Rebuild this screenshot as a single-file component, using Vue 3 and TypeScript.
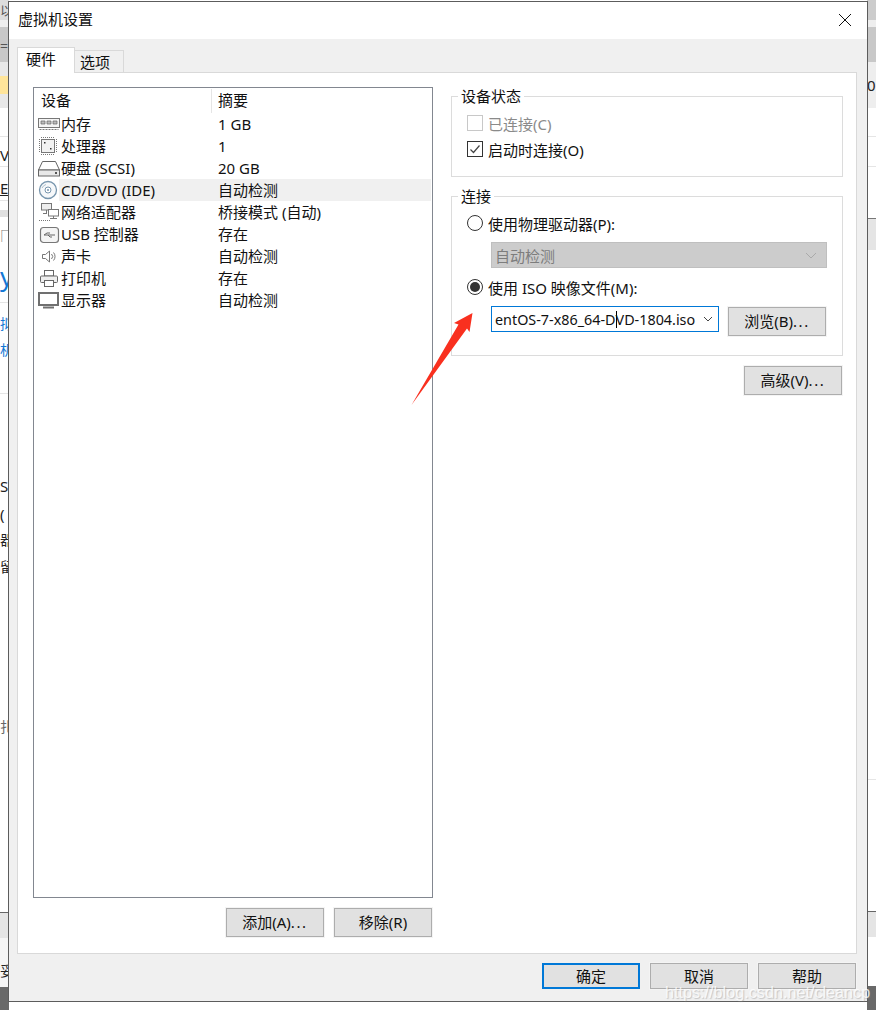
<script setup lang="ts">
interface Seg { h: number; bg: string; text?: string; color?: string; size?: number; line?: string; under?: boolean }
const leftSegs: Seg[] = [
  { h: 20, bg: '#dddddd', text: '以', color: '#555', size: 13 },
  { h: 7, bg: '#eeeeee' },
  { h: 9, bg: '#c8c8c8' },
  { h: 26, bg: '#c8c8c8', text: '=', color: '#555', size: 14 },
  { h: 14, bg: '#e8e8e8' },
  { h: 18, bg: '#ffe59a' },
  { h: 14, bg: '#e8e8e8' },
  { h: 29, bg: '#ffffff', line: '#e5e5e5' },
  { h: 8, bg: '#ffffff' },
  { h: 22, bg: '#ffffff', text: 'VI', color: '#222', size: 15, line: '#e5e5e5' },
  { h: 11, bg: '#ffffff' },
  { h: 23, bg: '#ffffff', text: 'E', color: '#222', size: 15, under: true, line: '#e5e5e5' },
  { h: 9, bg: '#ffffff' },
  { h: 7, bg: '#e0e0e0' },
  { h: 9, bg: '#ffffff' },
  { h: 16, bg: '#ffffff', text: '□', color: '#777', size: 15 },
  { h: 24, bg: '#ffffff' },
  { h: 37, bg: '#ffffff', text: 'y', color: '#1478d4', size: 26, line: '#e5e5e5' },
  { h: 11, bg: '#ffffff' },
  { h: 26, bg: '#ffffff', text: '拟', color: '#1478d4', size: 14 },
  { h: 54, bg: '#ffffff', text: '机', color: '#1478d4', size: 14, line: '#e5e5e5' },
  { h: 82, bg: '#ffffff' },
  { h: 28, bg: '#ffffff', text: 'SI', color: '#222', size: 15 },
  { h: 26, bg: '#ffffff', text: '(', color: '#222', size: 15 },
  { h: 27, bg: '#ffffff', text: '器', color: '#222', size: 14 },
  { h: 160, bg: '#ffffff', text: '留', color: '#222', size: 14 },
  { h: 27, bg: '#ffffff', text: '扎', color: '#666', size: 14 },
  { h: 169, bg: '#ffffff', line: '#666666' },
  { h: 25, bg: '#e5e5e5' },
  { h: 23, bg: '#f5f5f5' },
  { h: 26, bg: '#f5f5f5', text: '妥', color: '#222', size: 14 },
  { h: 23, bg: '#696969' },
]
const rightSegs: Seg[] = [
  { h: 20, bg: '#cccccc' },
  { h: 7, bg: '#eeeeee' },
  { h: 35, bg: '#c8c8c8' },
  { h: 13, bg: '#eeeeee' },
  { h: 33, bg: '#eeeeee', text: '0', color: '#222', size: 15 },
  { h: 29, bg: '#ffffff', line: '#e5e5e5' },
  { h: 30, bg: '#ffffff', line: '#e5e5e5' },
  { h: 52, bg: '#ffffff', line: '#777777' },
  { h: 31, bg: '#e5e5e5' },
  { h: 530, bg: '#ffffff', line: '#e5e5e5' },
  { h: 132, bg: '#ffffff', line: '#666666' },
  { h: 25, bg: '#e5e5e5' },
  { h: 49, bg: '#ffffff' },
  { h: 24, bg: '#696969' },
]
function segStyle(s: Seg) {
  return {
    height: s.h + 'px',
    background: s.bg,
    color: s.color,
    fontSize: s.size ? s.size + 'px' : undefined,
    borderBottom: s.line ? `1px solid ${s.line}` : undefined,
    textDecoration: s.under ? 'underline' : undefined,
  }
}
const devices = [
  { id: 'mem', name: '内存', summary: '1 GB' },
  { id: 'cpu', name: '处理器', summary: '1' },
  { id: 'hdd', name: '硬盘 (SCSI)', summary: '20 GB' },
  { id: 'cd', name: 'CD/DVD (IDE)', summary: '自动检测', active: true },
  { id: 'net', name: '网络适配器', summary: '桥接模式 (自动)' },
  { id: 'usb', name: 'USB 控制器', summary: '存在' },
  { id: 'snd', name: '声卡', summary: '自动检测' },
  { id: 'prn', name: '打印机', summary: '存在' },
  { id: 'mon', name: '显示器', summary: '自动检测' },
]
</script>

<template>
  <div class="desk">
    <div class="strip strip-left">
      <div v-for="(s, i) in leftSegs" :key="i" class="seg" :style="segStyle(s)">{{ s.text }}</div>
    </div>
    <div class="strip strip-right">
      <div v-for="(s, i) in rightSegs" :key="i" class="seg" :style="segStyle(s)">{{ s.text }}</div>
    </div>

    <div class="dialog">
      <header class="titlebar">
        <span class="title">虚拟机设置</span>
        <svg class="close" width="14" height="14" viewBox="0 0 14 14"><path d="M1 1 L13 13 M13 1 L1 13" stroke="#111" stroke-width="1" fill="none" /></svg>
      </header>
      <div class="body">
        <div class="tabs">
          <div class="tab tab-active">硬件</div>
          <div class="tab">选项</div>
        </div>
        <div class="panel">
          <div class="left">
            <div class="list">
              <div class="list-head">
                <span class="col-a">设备</span>
                <span class="col-b">摘要</span>
              </div>
              <div v-for="d in devices" :key="d.id" class="row">
                <svg class="ico" width="25" height="22" viewBox="0 0 25 22">
                  <g v-if="d.id === 'mem'" fill="none" stroke="#777">
                    <rect x="4.5" y="5.5" width="21" height="9" fill="#f4f4f4" />
                    <path d="M7 8h4v3H7zM13 8h4v3h-4zM19 8h4v3h-4z" fill="#bbb" stroke="#666" stroke-width=".7" />
                    <path d="M5.5 16.5h19" stroke-dasharray="2 1" />
                  </g>
                  <g v-else-if="d.id === 'cpu'" fill="none" stroke="#777">
                    <rect x="7.5" y="4.5" width="13" height="13" fill="#f2f2f2" />
                    <path d="M7 2.500h14M7 19.500h14M5.500 4v14M22.500 4v14" stroke-dasharray="1 1" />
                    <path d="M10 7h1.500v1.500H10zM16 13h1.500v1.500H16z" fill="#333" stroke="none" />
                  </g>
                  <g v-else-if="d.id === 'hdd'" fill="none" stroke="#666">
                    <path d="M8.500 4.500h13l4 8.500h-21z" fill="#fff" />
                    <rect x="4.500" y="13" width="21" height="6" fill="#e8e8e8" />
                    <rect x="21" y="15" width="2" height="2" fill="#555" stroke="none" />
                  </g>
                  <g v-else-if="d.id === 'cd'" fill="none" stroke="#7795ad">
                    <circle cx="14" cy="11" r="8.500" stroke-width="1.300" fill="#f6f8fa" />
                    <circle cx="14" cy="11" r="3" fill="#fff" />
                    <circle cx="14" cy="11" r="1" fill="#7795ad" stroke="none" />
                    <path d="M8 9a6.500 6.500 0 0 1 4-3.500" stroke="#aebfcc" />
                  </g>
                  <g v-else-if="d.id === 'net'" fill="none" stroke="#777">
                    <rect x="7.500" y="2.500" width="10" height="6.500" fill="#eee" />
                    <path d="M12.500 9v3M9 12.500h4" />
                    <rect x="14.500" y="8.500" width="10" height="6.500" fill="#fff" />
                    <path d="M19.500 15v2M16 17.500h7" />
                    <path d="M5 19.500h12" stroke-dasharray="1 1" />
                  </g>
                  <g v-else-if="d.id === 'usb'" fill="none" stroke="#777">
                    <rect x="6.500" y="4.500" width="18" height="15" rx="3" stroke-width="1.200" fill="#f4f4f4" />
                    <path d="M10 12h11M10 12l3-2M13 10h3M14 12l2 2h2" stroke="#666" />
                  </g>
                  <g v-else-if="d.id === 'snd'" fill="none" stroke="#777">
                    <path d="M8.500 9.500h3l4-3.500v11l-4-3.500h-3z" fill="#fff" />
                    <path d="M17.500 9a3.500 3.500 0 0 1 0 5M19.500 7.500a6 6 0 0 1 0 8" />
                  </g>
                  <g v-else-if="d.id === 'prn'" fill="none" stroke="#666">
                    <rect x="10.500" y="3.500" width="9" height="5.500" fill="#fff" />
                    <rect x="6.500" y="9" width="17" height="6.500" rx="1" fill="#eee" />
                    <rect x="10.500" y="13.500" width="9" height="6" fill="#fff" />
                  </g>
                  <g v-else fill="none" stroke="#707070">
                    <rect x="5" y="4" width="19" height="12" stroke-width="2" fill="#fff" />
                    <path d="M9 18.500h11" stroke-width="2" />
                  </g>
                </svg>
                <div class="row-body" :class="{ 'row-active': d.active }">
                  <span class="cell-name">{{ d.name }}</span>
                  <span class="cell-sum">{{ d.summary }}</span>
                </div>
              </div>
            </div>
            <div class="left-actions">
              <button class="btn" type="button">添加(A)<span class="dots">...</span></button>
              <button class="btn" type="button">移除(R)</button>
            </div>
          </div>

          <div class="right">
            <fieldset class="group group-status">
              <legend>设备状态</legend>
              <div class="opt opt-disabled">
                <span class="check check-off"></span>已连接(C)
              </div>
              <div class="opt opt-second">
                <span class="check">
                  <svg width="14" height="14" viewBox="0 0 14 14"><path d="M2.500 7.500 L5.500 10.500 L11.500 3.500" fill="none" stroke="#444" stroke-width="1.200" /></svg>
                </span>启动时连接(O)
              </div>
            </fieldset>
            <fieldset class="group group-conn">
              <legend>连接</legend>
              <div class="opt">
                <span class="radio"></span>使用物理驱动器(P):
              </div>
              <div class="combo combo-disabled">
                <span>自动检测</span>
                <svg width="12" height="7" viewBox="0 0 12 7"><path d="M1 1 L6 6 L11 1" fill="none" stroke="#aaa" /></svg>
              </div>
              <div class="opt opt-iso">
                <span class="radio"><i class="dot"></i></span>使用 ISO 映像文件(M):
              </div>
              <div class="iso-row">
                <div class="combo combo-iso">
                  <span class="iso-text">entOS-7-x86_64-D<i class="caret"></i>VD-1804.iso</span>
                  <svg width="10" height="6" viewBox="0 0 10 6"><path d="M1 1 L5 5 L9 1" fill="none" stroke="#444" /></svg>
                </div>
                <button class="btn" type="button">浏览(B)<span class="dots">...</span></button>
              </div>
            </fieldset>
            <div class="adv">
              <button class="btn" type="button">高级(V)<span class="dots">...</span></button>
            </div>
          </div>
        </div>
        <footer class="footer">
          <button class="btn btn-primary" type="button">确定</button>
          <button class="btn" type="button">取消</button>
          <button class="btn" type="button">帮助</button>
        </footer>
      </div>
    </div>

    <svg class="arrow" width="70" height="100" viewBox="410 310 70 100">
      <path d="M472.500 313 L454 323 L458.500 324.500 L411.500 405 L467 328.500 L469.500 332 Z" fill="#f9301f" />
    </svg>
    <div class="watermark">https://blog.csdn.net/cleancp</div>
  </div>
</template>

<style scoped>
.desk {
  position: relative;
  width: 876px;
  height: 1010px;
  overflow: hidden;
  background: #fff;
  display: flex;
  justify-content: space-between;
  font-family: "Noto Sans", "Noto Sans CJK SC", sans-serif;
  font-size: 15px;
  color: #111;
}
.strip {
  width: 9px;
  display: flex;
  flex-direction: column;
  overflow: hidden;
}
.seg {
  box-sizing: border-box;
  flex: none;
  overflow: hidden;
  white-space: nowrap;
  line-height: 20px;
}
.dialog {
  position: absolute;
  left: 8px;
  top: 1px;
  width: 860px;
  height: 1001px;
  box-sizing: border-box;
  border: 1px solid #5c5c5c;
  background: #f0f0f0;
  display: flex;
  flex-direction: column;
}
.titlebar {
  height: 37px;
  box-sizing: border-box;
  flex: none;
  background: #fff;
  display: flex;
  align-items: center;
  justify-content: space-between;
  padding: 0 15px 2px 9px;
}
.title {
  line-height: 20px;
  font-size: 15px;
  margin-bottom: 2px;
}
.body {
  flex: 1;
  display: flex;
  flex-direction: column;
  padding: 9px 10px 0 8px;
}
.tabs {
  display: flex;
  align-items: flex-end;
  height: 25px;
  flex: none;
  position: relative;
  z-index: 1;
  margin-bottom: -1px;
}
.tab {
  width: 49px;
  height: 23px;
  box-sizing: border-box;
  border: 1px solid #d9d9d9;
  border-left: 0;
  background: #f0f0f0;
  padding-left: 5px;
  line-height: 22px;
}
.tab-active {
  width: 58px;
  height: 26px;
  background: #fff;
  border-left: 1px solid #d9d9d9;
  border-bottom: 0;
  padding-left: 8px;
  line-height: 23px;
}
.panel {
  height: 882px;
  flex: none;
  box-sizing: border-box;
  background: #fff;
  border: 1px solid #d9d9d9;
  display: flex;
  padding: 14px 13px 0 15px;
}
.left {
  width: 400px;
  flex: none;
  display: flex;
  flex-direction: column;
}
.list {
  height: 811px;
  box-sizing: border-box;
  border: 1px solid #828790;
  flex: none;
}
.list-head {
  height: 25px;
  display: flex;
  line-height: 24px;
}
.col-a {
  width: 178px;
  box-sizing: border-box;
  padding-left: 7px;
  border-right: 1px solid #e5e5e5;
  height: 24px;
  margin-top: 1px;
  line-height: 22px;
}
.col-b {
  padding-left: 6px;
}
.row {
  height: 22px;
  display: flex;
}
.ico {
  flex: none;
  overflow: visible;
}
.row-body {
  flex: 1;
  display: flex;
  line-height: 22px;
  margin-right: 1px;
}
.row-active {
  background: #f0f0f0;
}
.cell-name {
  width: 153px;
  padding-left: 2px;
  box-sizing: border-box;
  white-space: nowrap;
}
.cell-sum {
  padding-left: 6px;
  white-space: nowrap;
}
.left-actions {
  display: flex;
  justify-content: flex-end;
  gap: 10px;
  margin-top: 10px;
  padding-right: 1px;
}
.btn {
  width: 98px;
  height: 29px;
  box-sizing: border-box;
  border: 1px solid #adadad;
  outline: 1px solid #f4f4f4;
  background: #e1e1e1;
  color: #111;
  font: inherit;
  padding: 0;
  line-height: 25px;
  flex: none;
}
.dots {
  letter-spacing: 1.6px;
}
.right {
  margin-left: 18px;
  width: 392px;
  display: flex;
  flex-direction: column;
}
.group {
  margin: 0;
  padding: 0 0 0 15px;
  box-sizing: border-box;
  border: 1px solid #dcdcdc;
  min-width: 0;
}
.group legend {
  margin-left: -9px;
  padding: 0 3px;
  line-height: 18px;
}
.group-status {
  height: 90px;
}
.group-conn {
  height: 169px;
  margin-top: 10px;
}
.opt {
  display: flex;
  align-items: center;
  gap: 5px;
  height: 22px;
  white-space: nowrap;
}
.group-status .opt:first-of-type {
  margin-top: 7px;
}
.opt-disabled {
  color: #8a8a8a;
}
.opt-second {
  margin-top: 4px;
}
.check {
  width: 16px;
  height: 16px;
  box-sizing: border-box;
  border: 1px solid #333;
  display: flex;
  align-items: center;
  justify-content: center;
  flex: none;
  background: #fff;
}
.check-off {
  border-color: #c8c8c8;
}
.radio {
  width: 16px;
  height: 16px;
  box-sizing: border-box;
  border: 1px solid #333;
  border-radius: 50%;
  display: flex;
  align-items: center;
  justify-content: center;
  flex: none;
  background: #fff;
}
.dot {
  width: 10px;
  height: 10px;
  border-radius: 50%;
  background: #333;
}
.group-conn .opt:first-of-type {
  margin-top: 7px;
}
.combo {
  box-sizing: border-box;
  height: 26px;
  margin-left: 24px;
  display: flex;
  align-items: center;
  justify-content: space-between;
  white-space: nowrap;
}
.combo-disabled {
  width: 336px;
  margin-top: 8px;
  background: #cccccc;
  border: 1px solid #bfbfbf;
  color: #7d7d7d;
  padding: 0 9px 0 3px;
}
.opt-iso {
  margin-top: 8px;
}
.iso-row {
  display: flex;
  gap: 9px;
  margin-top: 8px;
  align-items: flex-start;
}
.combo-iso {
  width: 228px;
  background: #fff;
  border: 1px solid #0078d7;
  padding: 0 5px 0 3px;
}
.iso-row .btn {
  margin-top: 1px;
}
.iso-text {
  font-size: 14.35px;
}
.caret {
  display: inline-block;
  width: 1px;
  height: 17px;
  margin-right: -1px;
  background: #000;
  vertical-align: -3px;
}
.adv {
  display: flex;
  justify-content: flex-end;
  margin-top: 10px;
  padding-right: 1px;
}
.footer {
  display: flex;
  justify-content: flex-end;
  gap: 10px;
  margin-top: 9px;
  padding-right: 1px;
}
.footer .btn {
  height: 26px;
  line-height: 22px;
}
.btn-primary {
  border: 2px solid #0078d7;
  outline: 0;
}
.arrow {
  position: absolute;
  left: 410px;
  top: 310px;
}
.watermark {
  position: absolute;
  left: 665px;
  top: 981px;
  font-family: "Liberation Sans", sans-serif;
  font-size: 16.2px;
  line-height: 22px;
  color: rgba(255, 255, 255, 0.8);
  text-shadow: 1px 1px 1px rgba(130, 130, 130, 0.4);
  white-space: nowrap;
}
</style>
